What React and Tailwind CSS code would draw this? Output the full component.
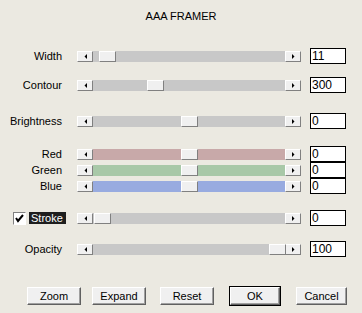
import React from "react";

const font = { fontFamily: '"Liberation Sans", Arial, sans-serif' };

function Arrow({ dir }) {
  return (
    <div className="w-[16px] h-[11px] shrink-0 bg-[#f0f0f0] border border-t-white border-l-white border-r-[#808080] border-b-[#808080] flex items-center justify-center">
      <svg width="3" height="5" viewBox="0 0 3 5">
        {dir === "left" ? (
          <polygon points="3,0 3,5 0.5,2.5" fill="#000" />
        ) : (
          <polygon points="0,0 0,5 2.5,2.5" fill="#000" />
        )}
      </svg>
    </div>
  );
}

function Slider({ thumb, track }) {
  return (
    <div className="relative flex w-[224px] h-[11px]">
      <Arrow dir="left" />
      <div className={`flex-1 ${track}`} />
      <Arrow dir="right" />
      <div
        className="absolute top-0 w-[17px] h-[11px] bg-[#f0f0f0] border border-t-white border-l-white border-r-[#808080] border-b-[#808080]"
        style={{ left: thumb }}
      />
    </div>
  );
}

function ValueBox({ value }) {
  return (
    <div className="ml-[9px] w-[36px] h-[16px] bg-white border border-black flex items-center pl-[1px] text-[12px] leading-none text-black">
      {value}
    </div>
  );
}

function Row({ label, thumb, track = "bg-[#c8c8c8]", value, className = "" }) {
  return (
    <div className={`flex items-center h-[16px] ${className}`}>
      <div className="w-[62px] text-right text-[11px] leading-none text-black">{label}</div>
      <div className="ml-[15px]">
        <Slider thumb={thumb} track={track} />
      </div>
      <ValueBox value={value} />
    </div>
  );
}

function Button({ children, def, className = "" }) {
  return (
    <div
      className={`h-[18px] flex items-center justify-center text-[11px] text-black bg-[#f0f0f0] ${
        def ? "outline outline-1 outline-black" : ""
      } border border-t-white border-l-white border-r-[#606060] border-b-[#606060] shadow-[inset_-1px_-1px_0_#a0a0a0] ${className}`}
    >
      {children}
    </div>
  );
}

export default function App() {
  return (
    <div className="w-[362px] h-[313px] bg-[#ebe9e1] flex flex-col" style={font}>
      <div className="mt-[10px] h-[13px] text-center text-[11px] leading-[13px] text-black">AAA FRAMER</div>
      <Row className="mt-[25px]" label="Width" thumb={22} value="11" />
      <Row className="mt-[13px]" label="Contour" thumb={70} value="300" />
      <Row className="mt-[20px]" label="Brightness" thumb={104} value="0" />
      <Row className="mt-[17px]" label="Red" thumb={104} track="bg-[#c8a9a9]" value="0" />
      <Row label="Green" thumb={104} track="bg-[#a8c8a8]" value="0" />
      <Row label="Blue" thumb={104} track="bg-[#98abe0]" value="0" />
      <div className="flex items-center h-[16px] mt-[16px]">
        <div className="ml-[13px] w-[13px] h-[13px] bg-white border border-t-[#808080] border-l-[#808080] border-b-white border-r-white flex items-center justify-center">
          <svg width="9" height="9" viewBox="0 0 9 9">
            <polyline points="1,4 3,7 8,1" fill="none" stroke="#000" strokeWidth="2" />
          </svg>
        </div>
        <div className="ml-[3px] w-[37px] h-[12px] bg-[#1e1e1e] text-white text-[11px] leading-[12px] pl-[2px]">Stroke</div>
        <div className="ml-[11px]">
          <Slider thumb={17} track="bg-[#c8c8c8]" />
        </div>
        <ValueBox value="0" />
      </div>
      <Row className="mt-[15px]" label="Opacity" thumb={192} value="100" />
      <div className="mt-[30px] flex h-[18px]">
        <Button className="ml-[27px] w-[54px]">Zoom</Button>
        <Button className="ml-[11px] w-[54px]">Expand</Button>
        <Button className="ml-[14px] w-[54px]">Reset</Button>
        <Button def className="ml-[16px] w-[50px]">OK</Button>
        <Button className="ml-[16px] w-[51px]">Cancel</Button>
      </div>
    </div>
  );
}
